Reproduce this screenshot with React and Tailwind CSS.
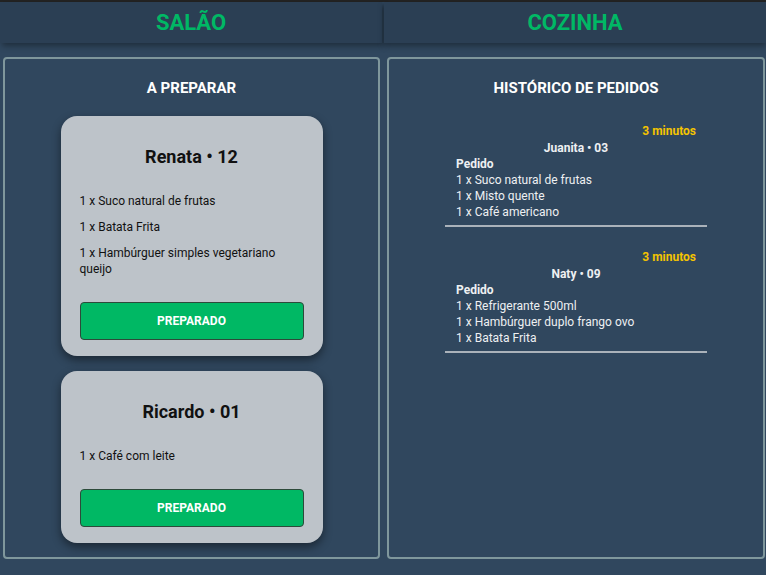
import React from "react";

const preparing = [
  {
    name: "Renata",
    table: "12",
    items: ["1 x Suco natural de frutas", "1 x Batata Frita", "1 x Hambúrguer simples vegetariano queijo"],
  },
  { name: "Ricardo", table: "01", items: ["1 x Café com leite"] },
];

const history = [
  {
    time: "3 minutos",
    name: "Juanita",
    table: "03",
    items: ["1 x Suco natural de frutas", "1 x Misto quente", "1 x Café americano"],
  },
  {
    time: "3 minutos",
    name: "Naty",
    table: "09",
    items: ["1 x Refrigerante 500ml", "1 x Hambúrguer duplo frango ovo", "1 x Batata Frita"],
  },
];

function OrderCard({ order }) {
  return (
    <div className="w-[262px] mx-auto bg-[#bdc3c9] rounded-[16px] shadow-[0_4px_10px_rgba(0,0,0,0.45)] pt-[29px] pb-[16px] px-[19px] text-[#111]">
      <h3 className="text-[18px] leading-6 font-bold text-center">
        {order.name} • {order.table}
      </h3>
      <ul className="mt-[24px] flex flex-col gap-[10px]">
        {order.items.map((item) => (
          <li key={item} className="text-[12px] leading-4">
            {item}
          </li>
        ))}
      </ul>
      <button className="mt-[25px] w-full h-[38px] bg-[#00b864] border border-[#2d4a3a] rounded-[4px] text-white text-[12px] font-bold">
        PREPARADO
      </button>
    </div>
  );
}

function HistoryEntry({ entry }) {
  return (
    <div className="border-b-2 border-[#aab2ba] px-[11px] pb-[5px] text-[12px] leading-4 text-[#eef0f2]">
      <p className="text-right font-bold text-[#f5c400]">{entry.time}</p>
      <p className="text-center font-bold mt-[1px]">
        {entry.name} • {entry.table}
      </p>
      <p className="font-bold">Pedido</p>
      {entry.items.map((item) => (
        <p key={item}>{item}</p>
      ))}
    </div>
  );
}

export default function App() {
  return (
    <div className="min-h-screen bg-[#30475e] font-['Roboto','Liberation_Sans',sans-serif]">
      {/* top tabs */}
      <header className="flex border-t-2 border-[#232323]">
        <div className="flex-1 h-[41px] bg-[#2b3f54] shadow-[2px_3px_6px_rgba(0,0,0,0.35)] flex items-center justify-center">
          <span className="text-[#00b865] text-[22px] font-bold">SALÃO</span>
        </div>
        <div className="w-[2px]" />
        <div className="flex-1 h-[41px] bg-[#2b3f54] shadow-[0_3px_6px_rgba(0,0,0,0.35)] flex items-center justify-center">
          <span className="text-[#00b865] text-[22px] font-bold">COZINHA</span>
        </div>
      </header>

      <main className="flex gap-[7px] pl-[3px] pr-[1px] pt-[14px] pb-4">
        {/* A preparar */}
        <section className="w-[377px] h-[502px] border-2 border-[#7f979c] rounded-[4px] pt-[20px]">
          <h2 className="text-center text-white font-bold text-[15px] leading-[18px]">A PREPARAR</h2>
          <div className="mt-[19px] flex flex-col gap-[15px]">
            {preparing.map((o) => (
              <OrderCard key={o.name} order={o} />
            ))}
          </div>
        </section>

        {/* Histórico */}
        <section className="flex-1 h-[502px] border-2 border-[#7f979c] rounded-[4px] pt-[20px]">
          <h2 className="text-center text-white font-bold text-[15px] leading-[18px]">HISTÓRICO DE PEDIDOS</h2>
          <div className="w-[262px] mx-auto mt-[26px] flex flex-col gap-[22px]">
            {history.map((e) => (
              <HistoryEntry key={e.name} entry={e} />
            ))}
          </div>
        </section>
      </main>
    </div>
  );
}
